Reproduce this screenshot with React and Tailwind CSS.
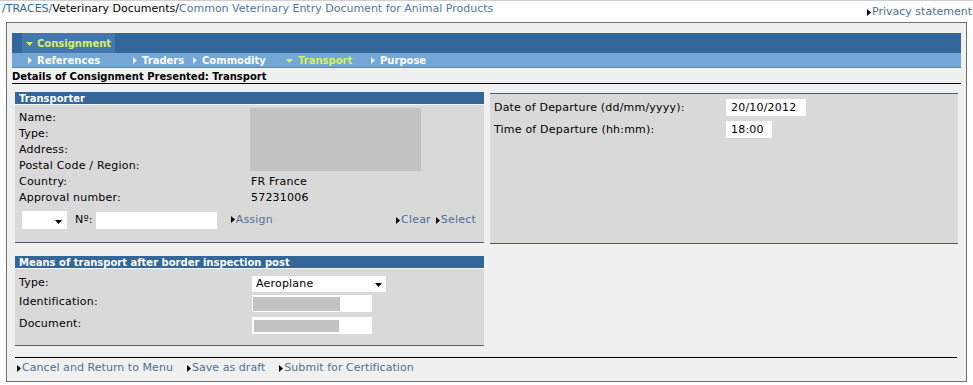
import React from "react";

const Tri = ({ c = "#000" }) => (
  <svg width="4" height="7" viewBox="0 0 4 7" className="shrink-0">
    <path d="M0 0L4 3.5L0 7Z" fill={c} />
  </svg>
);
const Down = ({ c = "#000" }) => (
  <svg width="7" height="4" viewBox="0 0 7 4" className="shrink-0">
    <path d="M0 0L7 0L3.5 4Z" fill={c} />
  </svg>
);

const Link = ({ children }) => (
  <span className="inline-flex items-center gap-[1px] text-[#4e7094]">
    <Tri />
    {children}
  </span>
);

const NavItem = ({ w, active, children }) => (
  <div className={`${w} flex items-center gap-[5px] shrink-0`}>
    {active ? <Down c="#d8f060" /> : <Tri c="#e8eef8" />}
    <span className={active ? "text-[#d8f060]" : "text-white"}>{children}</span>
  </div>
);

export default function App() {
  return (
    <div className="w-[973px] h-[385px] bg-white overflow-hidden font-['DejaVu_Sans',Verdana,sans-serif] text-[11px] leading-[16px] text-black">
      {/* top bar */}
      <div className="h-[22px] flex justify-between border-t border-[#cfcfcf]">
        <div className="pl-[2px]">
          <span className="text-[#336699]">/TRACES/</span>
          <span>Veterinary Documents/</span>
          <span className="text-[#52779e]">Common Veterinary Entry Document for Animal Products</span>
        </div>
        <div className="pr-[1px] pt-[3px]">
          <Link>Privacy statement</Link>
        </div>
      </div>

      {/* frame */}
      <div className="ml-[6px] w-[961px] h-[360px] border border-[#707070] bg-[#f0f0f0] pt-[10px] px-[5px]">
        {/* nav row 1 */}
        <div className="h-[20px] bg-[#336699] pl-[10px] flex">
          <div className="w-[93px] h-full bg-[#4478ad] flex items-center pt-[2px] pl-[4px] gap-[4px] font-bold text-[10px] text-[#d8f060]">
            <Down c="#d8f060" />
            <span>Consignment</span>
          </div>
        </div>
        {/* nav row 2 */}
        <div className="h-[15px] bg-[#74a6d6] border-b border-[#5a87b5] pl-[16px] pt-[1px] flex items-center font-bold text-[10px] leading-[14px]">
          <NavItem w="w-[105px]">References</NavItem>
          <NavItem w="w-[60px]">Traders</NavItem>
          <NavItem w="w-[93px]">Commodity</NavItem>
          <NavItem w="w-[85px]" active>Transport</NavItem>
          <NavItem w="w-[90px]">Purpose</NavItem>
        </div>
        {/* details title */}
        <div className="h-[16px] border-b border-black font-bold text-[10px] leading-[17px]">
          Details of Consignment Presented: Transport
        </div>

        {/* panels */}
        <div className="pl-[3px] flex gap-[6px] tracking-[0.2px]">
          {/* left column */}
          <div className="w-[469px] flex flex-col">
            {/* Transporter */}
            <div className="mt-[8px]">
              <div className="h-[12px] bg-[#336699] text-white font-bold text-[10px] leading-[13px] tracking-normal pl-[4px]">Transporter</div>
              <div className="h-[1px] bg-[#f4f6f8]" />
              <div className="h-[138px] bg-[#d9d9d9] border-b border-[#4d5f75] pl-[4px] pr-[8px] pt-[5px]">
                <div className="flex">
                  <div className="w-[232px]">
                    <div>Name:</div>
                    <div>Type:</div>
                    <div>Address:</div>
                    <div>Postal Code / Region:</div>
                    <div>Country:</div>
                    <div>Approval number:</div>
                  </div>
                  <div>
                    <div className="w-[171px] h-[63px] bg-[#c2c2c2] -ml-[1px] -mt-[2px] mb-[3px]" />
                    <div>FR France</div>
                    <div>57231006</div>
                  </div>
                </div>
                <div className="mt-[5px] flex items-center">
                  <div className="ml-[3px] w-[45px] h-[18px] bg-white flex items-end justify-end pr-[5px] pb-[5px]">
                    <Down />
                  </div>
                  <span className="ml-[8px]">Nº:</span>
                  <div className="ml-[3px] w-[121px] h-[17px] bg-white" />
                  <span className="ml-[14px]">
                    <Link>Assign</Link>
                  </span>
                  <div className="ml-auto flex gap-[5px]">
                    <Link>Clear</Link>
                    <Link>Select</Link>
                  </div>
                </div>
              </div>
            </div>

            {/* Means of transport */}
            <div className="mt-[13px]">
              <div className="h-[12px] bg-[#336699] text-white font-bold text-[10px] leading-[13px] tracking-normal pl-[4px]">
                Means of transport after border inspection post
              </div>
              <div className="h-[1px] bg-[#f4f6f8]" />
              <div className="h-[77px] bg-[#d9d9d9] border-b border-[#4d5f75] pl-[4px] pt-[6px]">
                <div className="flex items-center h-[16px]">
                  <div className="w-[233px] pb-[1px]">Type:</div>
                  <div className="w-[134px] h-[16px] mt-[1px] bg-white flex items-center justify-between pl-[4px] pr-[4px]">
                    <span>Aeroplane</span>
                    <div className="pt-[3px]">
                      <Down />
                    </div>
                  </div>
                </div>
                <div className="flex items-center h-[17px] mt-[4px]">
                  <div className="w-[233px] pb-[3px]">Identification:</div>
                  <div className="w-[120px] h-[17px] bg-white flex items-center pl-[1px]">
                    <div className="w-[87px] h-[14px] bg-[#c2c2c2]" />
                  </div>
                </div>
                <div className="flex items-center h-[17px] mt-[5px]">
                  <div className="w-[233px] pb-[3px]">Document:</div>
                  <div className="w-[120px] h-[17px] bg-white flex items-center pl-[2px]">
                    <div className="w-[85px] h-[12px] bg-[#c2c2c2]" />
                  </div>
                </div>
              </div>
            </div>
          </div>

          {/* right column */}
          <div className="w-[468px] mt-[9px]">
            <div className="h-[151px] bg-[#d9d9d9] border-t border-b border-[#4d5f75] pl-[4px] pt-[5px]">
              <div className="flex items-center h-[17px]">
                <div className="w-[232px]">Date of Departure (dd/mm/yyyy):</div>
                <div className="w-[80px] h-[17px] bg-white pl-[5px] leading-[17px]">20/10/2012</div>
              </div>
              <div className="flex items-center h-[17px] mt-[5px]">
                <div className="w-[232px]">Time of Departure (hh:mm):</div>
                <div className="w-[46px] h-[17px] bg-white pl-[5px] leading-[17px]">18:00</div>
              </div>
            </div>
          </div>
        </div>

        {/* footer */}
        <div className="ml-[3px] w-[942px] mt-[11px] border-t border-black pt-[2px] pl-[2px] flex gap-[14px] tracking-[0.05px]">
          <Link>Cancel and Return to Menu</Link>
          <Link>Save as draft</Link>
          <Link>Submit for Certification</Link>
        </div>
      </div>
    </div>
  );
}
